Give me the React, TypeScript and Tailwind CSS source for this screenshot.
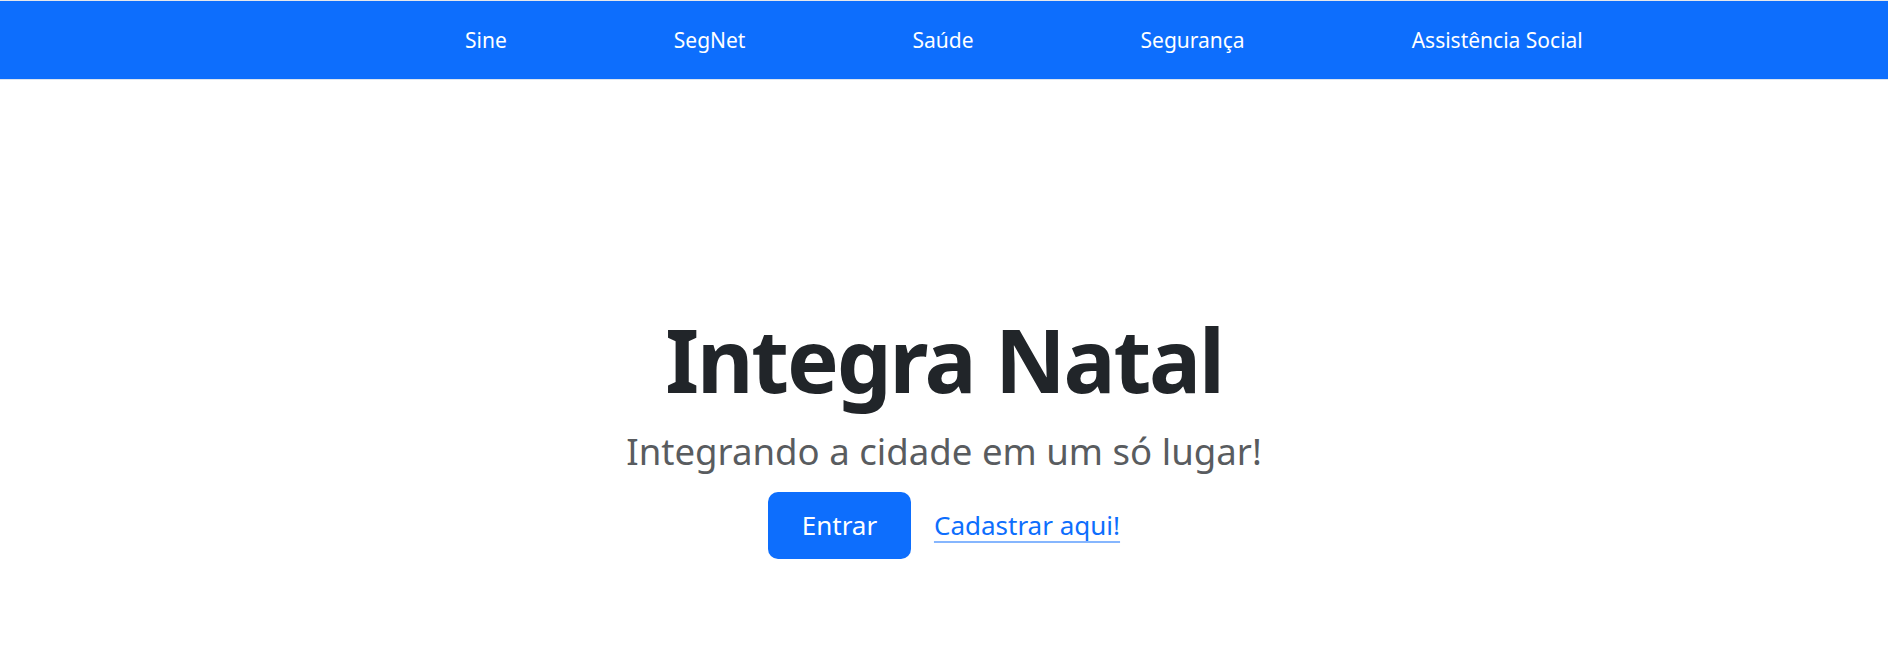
import React from 'react';

export default function App() {
    const links = ['Sine', 'SegNet', 'Saúde', 'Segurança', 'Assistência Social'];

    return (
        <div className="min-h-screen bg-white font-['Noto_Sans',sans-serif]">
            {/* NAVBAR */}
            <div className="border-t border-[#e5e7eb]">
                <nav className="h-[79px] bg-[#0d6efd] flex items-center border-b border-[#dbe4f0]">
                    <ul className="flex items-center gap-[167px] ml-[465px] pt-[2px]">
                        {links.map(l => (
                            <li key={l}>
                                <a href="#" className="text-white text-[21px]">{l}</a>
                            </li>
                        ))}
                    </ul>
                </nav>
            </div>

            {/* HERO */}
            <main className="flex flex-col items-center pt-[231px]">
                <h1 className="text-[87px] leading-[96px] font-bold text-[#212529] tracking-tight">Integra Natal</h1>
                <p className="text-[36.6px] leading-[48px] text-[#595c5f] mt-[20px]">Integrando a cidade em um só lugar!</p>
                <div className="flex items-center gap-[23px] mt-[17px]">
                    <button className="w-[143px] h-[67px] rounded-[10px] bg-[#0d6efd] text-white text-[26px]">
                        Entrar
                    </button>
                    <a href="#" className="text-[26px] text-[#0d6efd] underline decoration-[#0d6efd]/50 underline-offset-[6px]">
                        Cadastrar aqui!
                    </a>
                </div>
            </main>
        </div>
    );
}
